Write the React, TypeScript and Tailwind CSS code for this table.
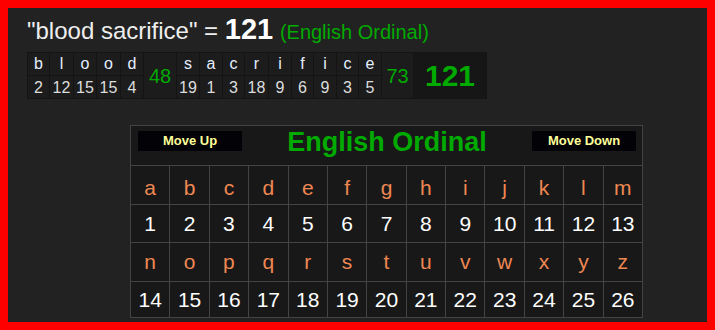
import React from 'react';

type Letter = { ch: string; val: number; w: number };

const WORD_ONE: Letter[] = [
  { ch: 'b', val: 2, w: 21 },
  { ch: 'l', val: 12, w: 23 },
  { ch: 'o', val: 15, w: 22 },
  { ch: 'o', val: 15, w: 23 },
  { ch: 'd', val: 4, w: 22 },
];

const WORD_TWO: Letter[] = [
  { ch: 's', val: 19, w: 22 },
  { ch: 'a', val: 1, w: 22 },
  { ch: 'c', val: 3, w: 21 },
  { ch: 'r', val: 18, w: 23 },
  { ch: 'i', val: 9, w: 22 },
  { ch: 'f', val: 6, w: 21 },
  { ch: 'i', val: 9, w: 22 },
  { ch: 'c', val: 3, w: 21 },
  { ch: 'e', val: 5, w: 22 },
];

const ALPHABET = 'abcdefghijklmnopqrstuvwxyz'.split('');

function LetterColumn({ item }: { item: Letter }) {
  return (
    <div className="flex flex-col gap-px" style={{ width: item.w }}>
      <div className="h-[22px] bg-[#1c1c1c] text-center text-[16px] leading-[22px] text-[#e4efff]">
        {item.ch}
      </div>
      <div className="h-[22px] bg-[#1c1c1c] pt-px text-center text-[16px] leading-[22px] text-[#dddddd]">
        {item.val}
      </div>
    </div>
  );
}

function SumCell({ value, width }: { value: number; width: string }) {
  return (
    <div className={`${width} flex items-center justify-center bg-[#1c1c1c] text-[20px] text-[#00aa00]`}>
      {value}
    </div>
  );
}

function Breakdown() {
  return (
    <div className="mt-[7px] ml-[19px] flex w-fit gap-px bg-[#141414] p-px">
      {WORD_ONE.map((l, i) => (
        <LetterColumn key={`a${i}`} item={l} />
      ))}
      <SumCell value={48} width="w-[32px]" />
      {WORD_TWO.map((l, i) => (
        <LetterColumn key={`b${i}`} item={l} />
      ))}
      <SumCell value={73} width="w-[31px]" />
      <div className="flex w-[72px] items-center justify-center bg-[#161616] text-[30px] font-bold text-[#00aa00]">
        121
      </div>
    </div>
  );
}

function CipherChart() {
  const rows = [ALPHABET.slice(0, 13), ALPHABET.slice(13)];

  return (
    <div className="mt-[26px] ml-[122px] grid w-[513px] grid-cols-[repeat(13,minmax(0,1fr))] gap-px bg-[#444444] p-px">
      <div className="col-span-full flex h-[39px] items-start justify-between bg-[#181818] pt-[5px] pl-[7px] pr-[6px]">
        <button
          type="button"
          className="h-[20px] w-[104px] bg-[#020207] text-center text-[13px] font-bold leading-[20px] text-[#ffff99]"
        >
          Move Up
        </button>
        <div className="text-[27px] font-bold leading-[23px] text-[#00aa00]">English Ordinal</div>
        <button
          type="button"
          className="h-[20px] w-[104px] bg-[#020207] text-center text-[13px] font-bold leading-[20px] text-[#ffff99]"
        >
          Move Down
        </button>
      </div>

      {rows.map((row, r) => (
        <React.Fragment key={r}>
          {row.map((ch) => (
            <div
              key={ch}
              className={`flex items-center justify-center bg-[#181818] text-[21px] text-[#ee8752] ${
                r === 0 ? 'h-[38px] pt-[6px]' : 'h-[38px]'
              }`}
            >
              {ch}
            </div>
          ))}
          {row.map((ch) => (
            <div
              key={`${ch}-n`}
              className={`flex items-center justify-center bg-[#181818] text-[21px] text-white ${
                r === 0 ? 'h-[37px]' : 'h-[35px]'
              }`}
            >
              {ALPHABET.indexOf(ch) + 1}
            </div>
          ))}
        </React.Fragment>
      ))}
    </div>
  );
}

export default function App() {
  return (
    <div className="h-[330px] w-[715px] overflow-hidden border-8 border-[#ff0000] bg-[#222222] font-['Liberation_Sans',Arial,sans-serif]">
      <div className="mt-[7px] h-[30px] pl-[19px] text-[24px] leading-[28px] text-[#eeeeee]">
        "blood sacrifice" = <span className="text-[29px] font-bold text-white">121</span>{' '}
        <span className="text-[20px] text-[#00aa00]">(English Ordinal)</span>
      </div>
      <Breakdown />
      <CipherChart />
    </div>
  );
}
